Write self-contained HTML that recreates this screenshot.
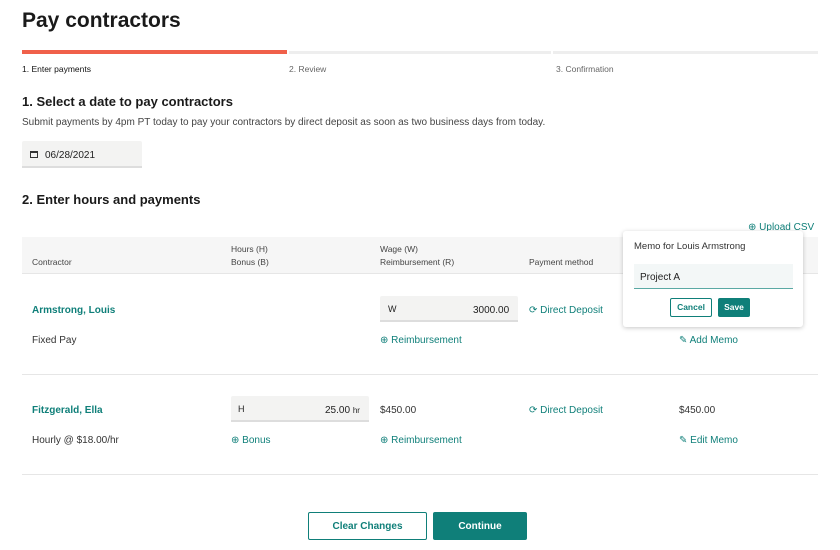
<!DOCTYPE html>
<html><head><style>
*{margin:0;padding:0;box-sizing:border-box}
body{width:840px;height:550px;background:#fff;font-family:"Liberation Sans",sans-serif;color:#222;position:relative;overflow:hidden}
.a{position:absolute;white-space:nowrap}
.t{color:#0f7f79}
.s{font-size:10px;padding-top:2px}
.inp{position:absolute;background:#f3f3f2;border-bottom:2px solid #ddd;border-radius:2px 2px 0 0}
</style></head><body>
<div class="a" style="left:22px;top:9px;font-size:21px;font-weight:bold;color:#1a1a1a">Pay contractors</div>
<div class="a" style="left:22px;top:50px;width:265px;height:4px;background:#f0604a"></div>
<div class="a" style="left:289px;top:51px;width:262px;height:3px;background:#eee"></div>
<div class="a" style="left:553px;top:51px;width:265px;height:3px;background:#eee"></div>
<div class="a" style="left:22px;top:64px;font-size:8.5px;color:#111">1. Enter payments</div>
<div class="a" style="left:289px;top:64px;font-size:8.5px;color:#666">2. Review</div>
<div class="a" style="left:556px;top:64px;font-size:8.5px;color:#666">3. Confirmation</div>
<div class="a" style="left:22px;top:94px;font-size:13px;font-weight:bold;color:#1a1a1a">1. Select a date to pay contractors</div>
<div class="a" style="left:22px;top:117px;font-size:10px;color:#444">Submit payments by 4pm PT today to pay your contractors by direct deposit as soon as two business days from today.</div>
<div class="inp" style="left:22px;top:141px;width:120px;height:27px"></div>
<div class="a" style="left:30px;top:151px;width:8px;height:7px;border:1px solid #333;border-top-width:2px"></div>
<div class="a s" style="left:45px;top:148px;color:#222">06/28/2021</div>
<div class="a" style="left:22px;top:192px;font-size:13px;font-weight:bold;color:#1a1a1a">2. Enter hours and payments</div>
<div class="a s t" style="left:748px;top:220px">⊕ Upload CSV</div>
<div class="a" style="left:22px;top:237px;width:796px;height:37px;background:#f6f6f6;border-bottom:1px solid #e6e6e6"></div>
<div class="a" style="left:32px;top:257px;font-size:8.5px;color:#444">Contractor</div>
<div class="a" style="left:231px;top:243px;font-size:8.5px;color:#444;line-height:13px">Hours (H)<br>Bonus (B)</div>
<div class="a" style="left:380px;top:243px;font-size:8.5px;color:#444;line-height:13px">Wage (W)<br>Reimbursement (R)</div>
<div class="a" style="left:529px;top:257px;font-size:8.5px;color:#444">Payment method</div>

<div class="a s t" style="left:32px;top:303px;font-weight:bold">Armstrong, Louis</div>
<div class="a s" style="left:32px;top:333px;color:#333">Fixed Pay</div>
<div class="inp" style="left:380px;top:296px;width:138px;height:26px"></div>
<div class="a" style="left:388px;top:304px;font-size:9px">W</div>
<div class="a s" style="left:473px;top:303px">3000.00</div>
<div class="a s t" style="left:529px;top:303px">⟳ Direct Deposit</div>
<div class="a s t" style="left:380px;top:333px">⊕ Reimbursement</div>
<div class="a s t" style="left:679px;top:333px">✎ Add Memo</div>
<div class="a" style="left:22px;top:374px;width:796px;height:1px;background:#e6e6e6"></div>

<div class="a s t" style="left:32px;top:403px;font-weight:bold">Fitzgerald, Ella</div>
<div class="a s" style="left:32px;top:433px;color:#333">Hourly @ $18.00/hr</div>
<div class="inp" style="left:231px;top:396px;width:138px;height:26px"></div>
<div class="a" style="left:238px;top:404px;font-size:9px">H</div>
<div class="a s" style="left:325px;top:403px">25.00 <span style="font-size:8px">hr</span></div>
<div class="a s" style="left:380px;top:403px;color:#333">$450.00</div>
<div class="a s t" style="left:529px;top:403px">⟳ Direct Deposit</div>
<div class="a s" style="left:679px;top:403px;color:#333">$450.00</div>
<div class="a s t" style="left:231px;top:433px">⊕ Bonus</div>
<div class="a s t" style="left:380px;top:433px">⊕ Reimbursement</div>
<div class="a s t" style="left:679px;top:433px">✎ Edit Memo</div>
<div class="a" style="left:22px;top:474px;width:796px;height:1px;background:#e6e6e6"></div>

<div class="a" style="left:308px;top:512px;width:119px;height:28px;border:1px solid #0f7f79;border-radius:2px;font-size:10px;font-weight:bold;color:#0f7f79;text-align:center;line-height:28px">Clear Changes</div>
<div class="a" style="left:433px;top:512px;width:94px;height:28px;background:#0f7f79;border-radius:2px;font-size:10px;font-weight:bold;color:#fff;text-align:center;line-height:29px">Continue</div>

<div class="a" style="left:623px;top:231px;width:180px;height:96px;background:#fff;border-radius:3px;box-shadow:0 1px 5px rgba(0,0,0,.22)"></div>
<div class="a" style="left:634px;top:241px;font-size:9.5px;color:#333">Memo for Louis Armstrong</div>
<div class="a" style="left:634px;top:264px;width:159px;height:25px;background:#f3f7f7;border-bottom:1px solid #5aa9a4"></div>
<div class="a s" style="left:640px;top:270px">Project A</div>
<div class="a" style="left:670px;top:298px;width:42px;height:19px;border:1px solid #0f7f79;border-radius:2px;font-size:8.5px;font-weight:bold;color:#0f7f79;text-align:center;line-height:17px">Cancel</div>
<div class="a" style="left:718px;top:298px;width:32px;height:19px;background:#0f7f79;border-radius:2px;font-size:8.5px;font-weight:bold;color:#fff;text-align:center;line-height:19px">Save</div>
</body></html>
